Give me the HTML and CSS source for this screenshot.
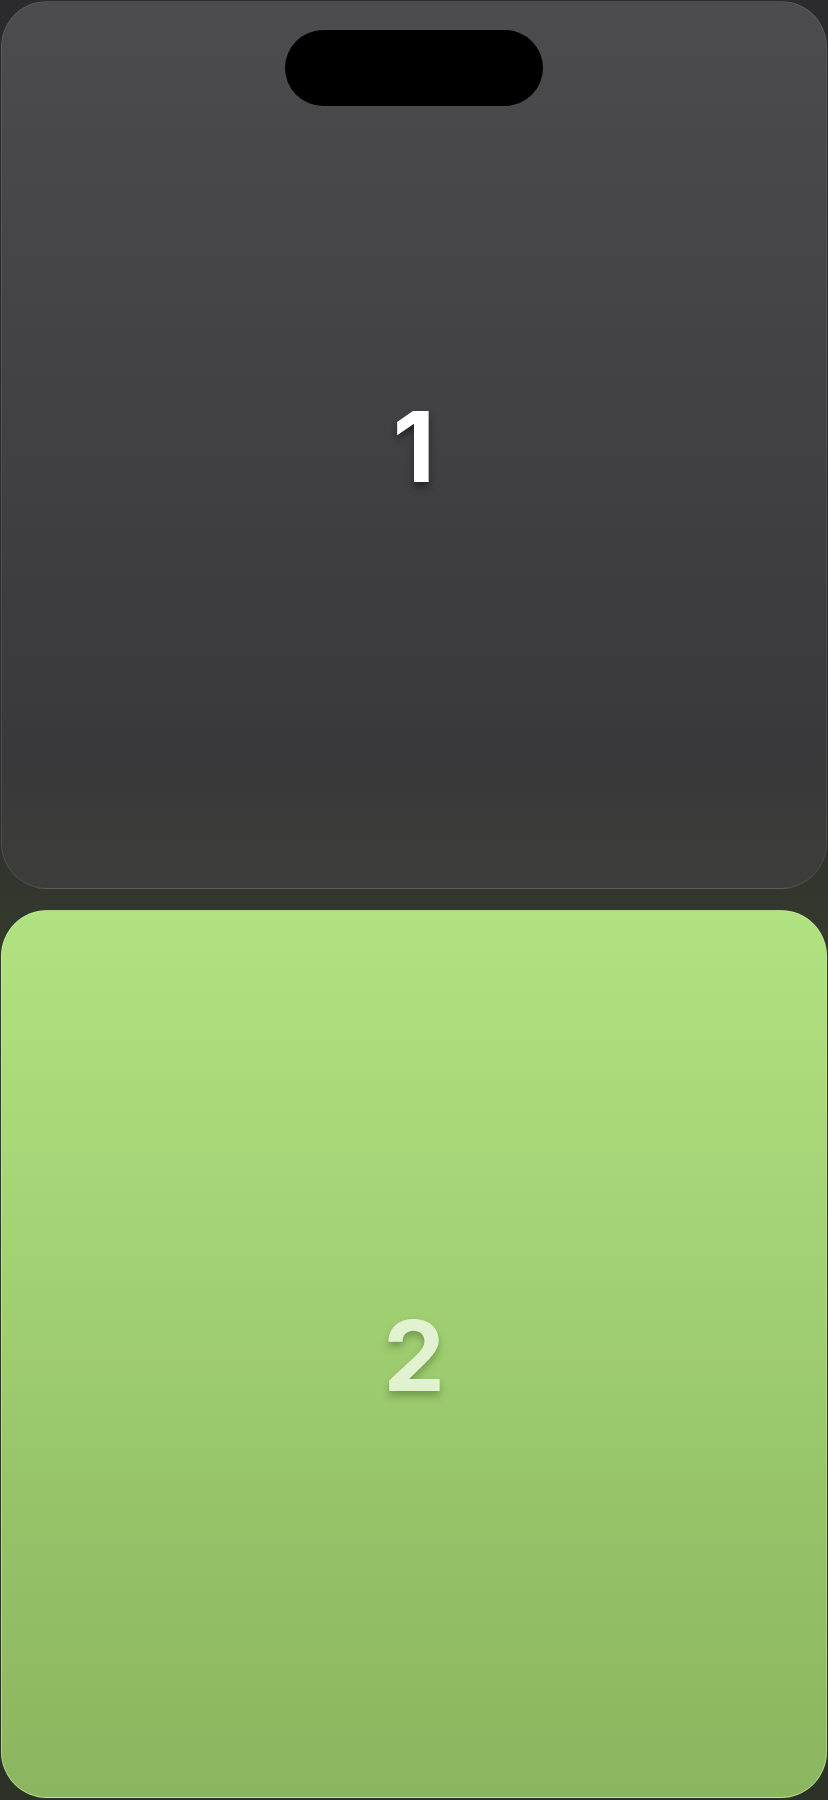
FILE: index.html
```html
<!DOCTYPE html>
<html lang="en">
<head>
<meta charset="utf-8">
<title>Cards</title>
<link rel="stylesheet" href="styles.css">
</head>
<body>
<main class="stack">
  <section class="card card-dark">
    <div class="island"></div>
    <span class="num num-dark">1</span>
  </section>
  <section class="card card-green">
    <span class="num num-green">2</span>
  </section>
</main>
</body>
</html>
```
FILE: styles.css
```css
html, body {
  margin: 0;
  padding: 0;
}
body {
  width: 828px;
  height: 1800px;
  background: linear-gradient(to bottom, #2b2b2d 0%, #303030 45%, #343a2c 52%, #2d3228 100%);
  font-family: Inter, "Noto Sans", "Liberation Sans", sans-serif;
  overflow: hidden;
}
.stack {
  display: flex;
  flex-direction: column;
  gap: 21px;
  padding: 1px 1px 2px 1px;
  height: 1800px;
  box-sizing: border-box;
}
.card {
  position: relative;
  height: 888px;
  flex: 0 0 888px;
  border-radius: 46px;
  display: flex;
  align-items: center;
  justify-content: center;
  box-sizing: border-box;
}
.card-dark {
  background: linear-gradient(to bottom, #4c4b4e 0%, #434245 40%, #39383a 85%, #3d3e3a 100%);
  border: 1px solid rgba(255, 255, 255, 0.09);
}
.card-green {
  background: linear-gradient(to bottom, #b1e281 0%, #a2d173 40%, #95c267 70%, #8bb55f 100%);
  border: 1px solid rgba(200, 240, 160, 0.55);
}
.island {
  position: absolute;
  top: 28px;
  left: 50%;
  transform: translateX(-50%);
  width: 258px;
  height: 76px;
  border-radius: 38px;
  background: #000;
}
.num {
  font-size: 98px;
  font-weight: 700;
  line-height: 1;
  margin-top: 4px;
}
.num-dark {
  color: #ffffff;
  text-shadow: 0 5px 7px rgba(0, 0, 0, 0.45);
}
.num-green {
  color: #e1f2d0;
  text-shadow: 0 5px 7px rgba(40, 70, 20, 0.35);
}
```
